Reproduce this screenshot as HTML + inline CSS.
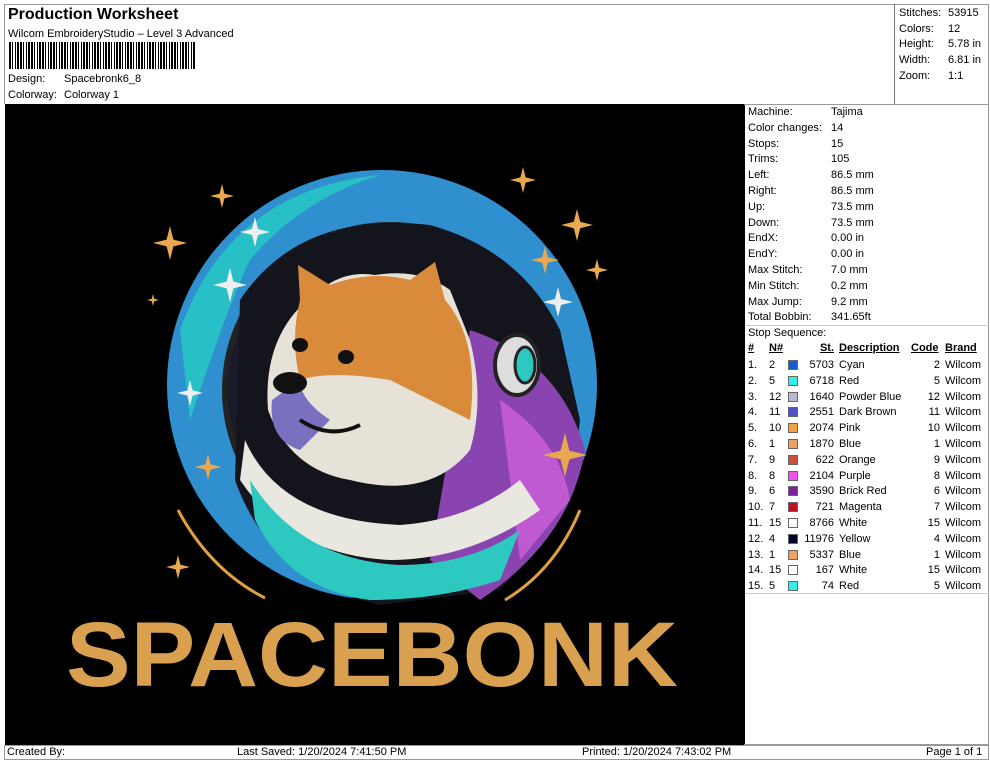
<!DOCTYPE html>
<html><head><meta charset="utf-8"><style>
*{margin:0;padding:0;box-sizing:border-box}
body{width:990px;height:762px;background:#fff;font-family:"Liberation Sans",Arial,sans-serif;font-size:11px;color:#000;position:relative;overflow:hidden}
.a{position:absolute;white-space:nowrap}
.r{text-align:right}
.u{text-decoration:underline;font-weight:bold}
.sw{position:absolute;width:10px;height:10px;border:1px solid #666}
</style></head><body>
<div class="a" style="left:4px;top:4px;width:985px;height:100px;border:1px solid #999;border-bottom:none"></div>
<div class="a" style="left:894px;top:4px;width:1px;height:100px;background:#777"></div>
<div class="a" style="left:8px;top:6px;font-size:16px;font-weight:bold">Production Worksheet</div>
<div class="a" style="left:8px;top:28px">Wilcom EmbroideryStudio – Level 3 Advanced</div>
<div class="a" style="left:9px;top:42px;width:186px;height:27px;background:repeating-linear-gradient(90deg,#000 0 2px,#fff 2px 3px,#000 3px 4px,#fff 4px 6px,#000 6px 7px,#fff 7px 8px,#000 8px 10px,#fff 10px 11px)"></div>
<div class="a" style="left:8px;top:73px">Design:</div><div class="a" style="left:64px;top:73px">Spacebronk6_8</div>
<div class="a" style="left:8px;top:89px">Colorway:</div><div class="a" style="left:64px;top:89px">Colorway 1</div>
<div class="a" style="left:899px;top:6px;line-height:15.7px">Stitches:<br>Colors:<br>Height:<br>Width:<br>Zoom:</div>
<div class="a" style="left:948px;top:6px;line-height:15.7px">53915<br>12<br>5.78 in<br>6.81 in<br>1:1</div>

<div class="a" style="left:5px;top:104px;width:740px;height:641px;background:#000;overflow:hidden">
<svg width="740" height="641" viewBox="5 104 740 641">
<defs><g id="st"><path d="M0,-10 L2,-2 L10,0 L2,2 L0,10 L-2,2 L-10,0 L-2,-2Z"/></g></defs>
<circle cx="382" cy="385" r="215" fill="#2f8fcf"/>
<path d="M180,330 Q230,190 380,175 Q300,200 250,260 Q230,300 190,420Z" fill="#27c0c6"/>
<ellipse cx="390" cy="390" rx="165" ry="165" fill="#1a1a2a" stroke="#222" stroke-width="6"/>
<path d="M240,300 Q300,210 430,225 Q520,250 560,330 L580,420 Q570,520 500,590 L380,605 Q270,580 235,480Z" fill="#14141c"/>
<path d="M470,330 Q560,360 585,450 Q570,540 480,600 L430,560Z" fill="#8a44b0"/>
<path d="M500,400 Q560,440 570,500 L520,560Z" fill="#c05ad0"/>
<path d="M245,440 Q280,520 400,525 Q470,520 520,480 L540,510 Q470,560 390,560 Q290,555 240,480Z" fill="#e8e8e0"/>
<path d="M250,480 Q300,560 400,565 Q470,565 520,530 L500,580 Q440,600 370,600 Q290,590 255,520Z" fill="#2dc8c0"/>
<path d="M268,410 Q262,330 320,290 Q345,270 375,275 Q420,268 450,290 L470,340 Q485,400 470,450 Q430,500 350,480 Q290,470 268,410Z" fill="#e7e2d8"/>
<path d="M300,300 L298,265 L330,285 Q370,270 410,280 L435,262 L445,300 Q480,340 470,420 Q430,400 390,380 Q330,370 300,380 Q290,340 300,300Z" fill="#d98a3a"/>
<path d="M272,400 Q268,440 300,450 L330,420 Q300,400 300,380Z" fill="#7a70c0"/>
<ellipse cx="290" cy="383" rx="17" ry="11" fill="#111"/>
<ellipse cx="300" cy="345" rx="8" ry="7" fill="#111"/><ellipse cx="346" cy="357" rx="8" ry="7" fill="#111"/>
<path d="M300,420 Q330,440 360,425" stroke="#111" stroke-width="4" fill="none"/>
<ellipse cx="517" cy="365" rx="22" ry="30" fill="#ddd" stroke="#222" stroke-width="4"/>
<ellipse cx="525" cy="365" rx="10" ry="18" fill="#2dc8c0" stroke="#222" stroke-width="3"/>
<g fill="none" stroke="#e0a040" stroke-width="3"><path d="M178,510 Q210,570 265,598"/><path d="M580,510 Q555,570 505,600"/></g>
<g fill="#e9a850">
<use href="#st" transform="translate(170,243) scale(1.7)"/><use href="#st" transform="translate(222,196) scale(1.2)"/>
<use href="#st" transform="translate(523,180) scale(1.3)"/><use href="#st" transform="translate(577,225) scale(1.6)"/>
<use href="#st" transform="translate(545,260) scale(1.4)"/><use href="#st" transform="translate(597,270) scale(1.1)"/>
<use href="#st" transform="translate(208,467) scale(1.3)"/><use href="#st" transform="translate(178,567) scale(1.2)"/>
<use href="#st" transform="translate(565,455) scale(2.2)"/><use href="#st" transform="translate(153,300) scale(.6)"/>
</g>
<g fill="#eee"><use href="#st" transform="translate(255,232) scale(1.5)"/><use href="#st" transform="translate(230,285) scale(1.7)"/>
<use href="#st" transform="translate(558,302) scale(1.5)"/><use href="#st" transform="translate(190,393) scale(1.3)"/></g>
<text x="372" y="686" text-anchor="middle" font-family="Liberation Sans,sans-serif" font-weight="bold" font-size="92" fill="#d9a050" textLength="612" lengthAdjust="spacingAndGlyphs">SPACEBONK</text>
</svg>
</div>

<div class="a" style="left:744px;top:104px;width:245px;height:641px;border:1px solid #999;border-left:none"></div>
<div class="a" style="left:745px;top:325px;width:244px;height:1px;background:#ccc"></div>
<div class="a" style="left:745px;top:593px;width:244px;height:1px;background:#ccc"></div>
<div class="a" style="left:748px;top:105px;line-height:15.8px">Machine:<br>Color changes:<br>Stops:<br>Trims:<br>Left:<br>Right:<br>Up:<br>Down:<br>EndX:<br>EndY:<br>Max Stitch:<br>Min Stitch:<br>Max Jump:<br>Total Bobbin:<br>Stop Sequence:</div>
<div class="a" style="left:831px;top:105px;line-height:15.8px">Tajima<br>14<br>15<br>105<br>86.5 mm<br>86.5 mm<br>73.5 mm<br>73.5 mm<br>0.00 in<br>0.00 in<br>7.0 mm<br>0.2 mm<br>9.2 mm<br>341.65ft</div>
<div class="a u" style="left:748px;top:342px">#</div>
<div class="a u" style="left:769px;top:342px">N#</div>
<div class="a u r" style="left:800px;top:342px;width:34px">St.</div>
<div class="a u" style="left:839px;top:342px">Description</div>
<div class="a u" style="left:911px;top:342px">Code</div>
<div class="a u" style="left:945px;top:342px">Brand</div>
<div class="a" style="left:748px;top:358px;line-height:15.8px">1.<br>2.<br>3.<br>4.<br>5.<br>6.<br>7.<br>8.<br>9.<br>10.<br>11.<br>12.<br>13.<br>14.<br>15.</div>
<div class="a" style="left:769px;top:358px;line-height:15.8px;width:14px;text-align:left">2<br>5<br>12<br>11<br>10<br>1<br>9<br>8<br>6<br>7<br>15<br>4<br>1<br>15<br>5</div>
<div class="a r" style="left:800px;top:358px;line-height:15.8px;width:34px">5703<br>6718<br>1640<br>2551<br>2074<br>1870<br>622<br>2104<br>3590<br>721<br>8766<br>11976<br>5337<br>167<br>74</div>
<div class="a" style="left:839px;top:358px;line-height:15.8px">Cyan<br>Red<br>Powder Blue<br>Dark Brown<br>Pink<br>Blue<br>Orange<br>Purple<br>Brick Red<br>Magenta<br>White<br>Yellow<br>Blue<br>White<br>Red</div>
<div class="a r" style="left:905px;top:358px;line-height:15.8px;width:35px">2<br>5<br>12<br>11<br>10<br>1<br>9<br>8<br>6<br>7<br>15<br>4<br>1<br>15<br>5</div>
<div class="a" style="left:945px;top:358px;line-height:15.8px">Wilcom<br>Wilcom<br>Wilcom<br>Wilcom<br>Wilcom<br>Wilcom<br>Wilcom<br>Wilcom<br>Wilcom<br>Wilcom<br>Wilcom<br>Wilcom<br>Wilcom<br>Wilcom<br>Wilcom</div>
<div class="sw" style="left:788px;top:360px;background:#1060d0"></div>
<div class="sw" style="left:788px;top:376px;background:#30f0f0"></div>
<div class="sw" style="left:788px;top:392px;background:#b8b8d0"></div>
<div class="sw" style="left:788px;top:407px;background:#5050d0"></div>
<div class="sw" style="left:788px;top:423px;background:#f0a040"></div>
<div class="sw" style="left:788px;top:439px;background:#f0a060"></div>
<div class="sw" style="left:788px;top:455px;background:#d05040"></div>
<div class="sw" style="left:788px;top:471px;background:#f050f0"></div>
<div class="sw" style="left:788px;top:486px;background:#8020a0"></div>
<div class="sw" style="left:788px;top:502px;background:#c01020"></div>
<div class="sw" style="left:788px;top:518px;background:#fff"></div>
<div class="sw" style="left:788px;top:534px;background:#000028"></div>
<div class="sw" style="left:788px;top:550px;background:#f0a060"></div>
<div class="sw" style="left:788px;top:565px;background:#fff"></div>
<div class="sw" style="left:788px;top:581px;background:#30f0f0"></div>

<div class="a" style="left:4px;top:745px;width:985px;height:15px;border:1px solid #999"></div>
<div class="a" style="left:7px;top:746px">Created By:</div>
<div class="a" style="left:237px;top:746px">Last Saved: 1/20/2024 7:41:50 PM</div>
<div class="a" style="left:582px;top:746px">Printed: 1/20/2024 7:43:02 PM</div>
<div class="a" style="left:926px;top:746px">Page 1 of 1</div>
</body></html>
